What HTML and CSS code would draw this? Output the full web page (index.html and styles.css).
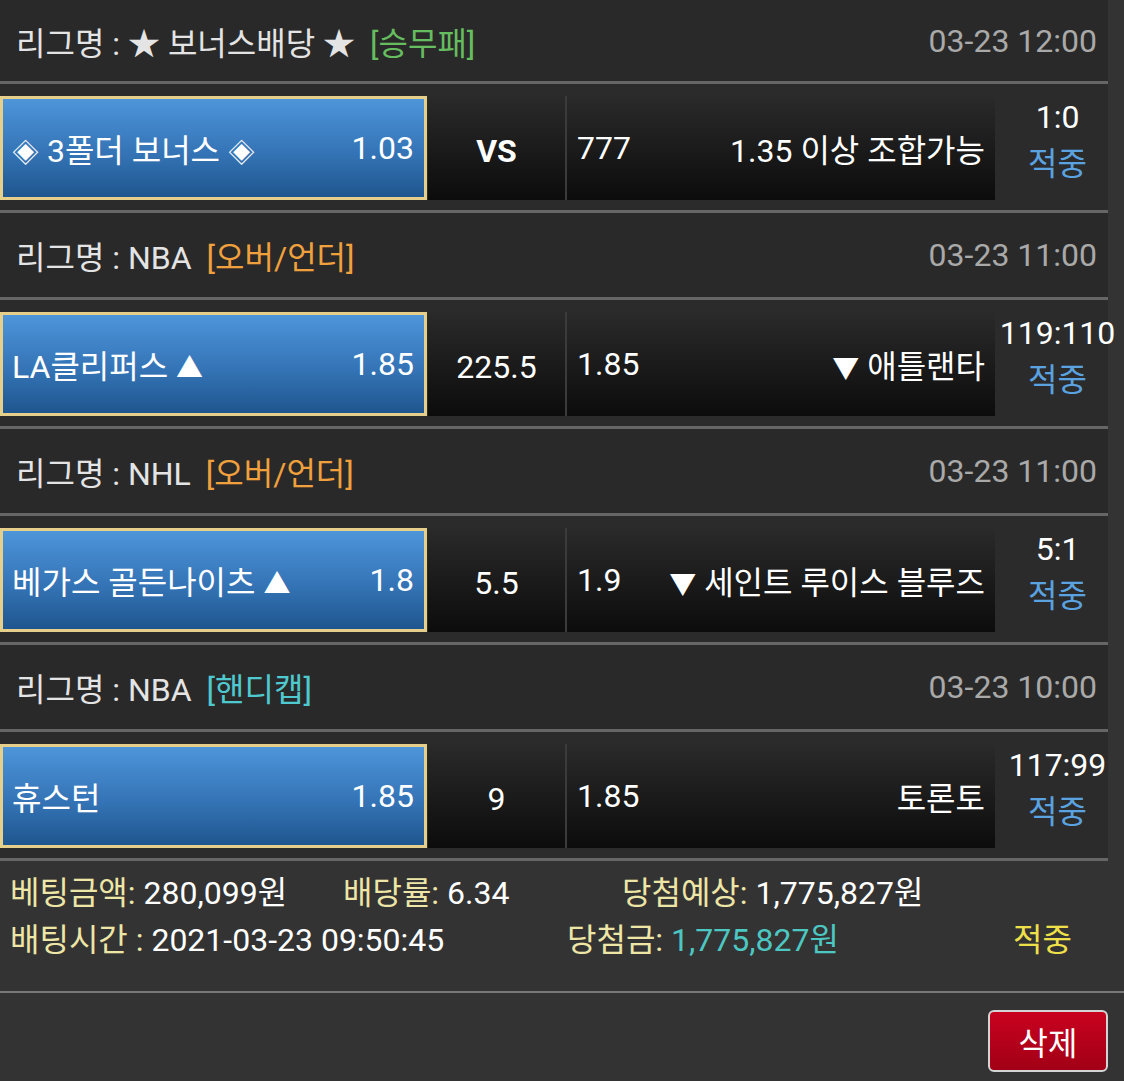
FILE: index.html
```html
<!DOCTYPE html>
<html lang="ko">
<head>
  <meta charset="UTF-8">
  <meta name="viewport" content="width=device-width, initial-scale=1.0">
  <title>배팅내역</title>
  <link rel="stylesheet" href="styles.css">
</head>
<body>
  <div class="bet-list">
    <div class="league">
      <span class="league-name">리그명 : ★ 보너스배당 ★</span>
      <span class="tag green">[승무패]</span>
      <span class="time">03-23 12:00</span>
    </div>
    <div class="match">
      <div class="home"><span><span class="sym">◈</span> 3폴더 보너스 <span class="sym">◈</span></span><span>1.03</span></div>
      <div class="mid vs">VS</div>
      <div class="away"><span>777</span><span>1.35 이상 조합가능</span></div>
      <div class="result"><div>1:0</div><div class="hit">적중</div></div>
    </div>

    <div class="league">
      <span class="league-name">리그명 : NBA</span>
      <span class="tag orange">[오버/언더]</span>
      <span class="time">03-23 11:00</span>
    </div>
    <div class="match">
      <div class="home"><span>LA클리퍼스 <span class="sym">▲</span></span><span>1.85</span></div>
      <div class="mid">225.5</div>
      <div class="away"><span>1.85</span><span><span class="sym">▼</span> 애틀랜타</span></div>
      <div class="result"><div>119:110</div><div class="hit">적중</div></div>
    </div>

    <div class="league">
      <span class="league-name">리그명 : NHL</span>
      <span class="tag orange">[오버/언더]</span>
      <span class="time">03-23 11:00</span>
    </div>
    <div class="match">
      <div class="home"><span>베가스 골든나이츠 <span class="sym">▲</span></span><span>1.8</span></div>
      <div class="mid">5.5</div>
      <div class="away"><span>1.9</span><span><span class="sym">▼</span> 세인트 루이스 블루즈</span></div>
      <div class="result"><div>5:1</div><div class="hit">적중</div></div>
    </div>

    <div class="league">
      <span class="league-name">리그명 : NBA</span>
      <span class="tag teal">[핸디캡]</span>
      <span class="time">03-23 10:00</span>
    </div>
    <div class="match">
      <div class="home"><span>휴스턴</span><span>1.85</span></div>
      <div class="mid">9</div>
      <div class="away"><span>1.85</span><span>토론토</span></div>
      <div class="result"><div>117:99</div><div class="hit">적중</div></div>
    </div>
  </div>

  <div class="summary">
    <div class="summary-line">
      <span class="col-a"><span class="label">베팅금액:</span> 280,099원</span>
      <span class="col-b"><span class="label">배당률:</span> 6.34</span>
      <span><span class="label">당첨예상:</span> 1,775,827원</span>
    </div>
    <div class="summary-line">
      <span class="col-c"><span class="label">배팅시간 :</span> 2021-03-23 09:50:45</span>
      <span class="col-d"><span class="label">당첨금:</span> <span class="win-amount">1,775,827원</span></span>
      <span class="status">적중</span>
    </div>
  </div>

  <div class="actions">
    <button class="delete-button">삭제</button>
  </div>
</body>
</html>
```

FILE: styles.css
```css
body {
  margin: 0;
  background-color: #333333;
  font-family: Roboto, "Noto Sans CJK KR", sans-serif;
  font-size: 32px;
  color: #ffffff;
  overflow: hidden;
}

.bet-list {
  width: 1108px;
}

.league {
  display: flex;
  align-items: center;
  height: 84px;
  padding: 0 11px 0 16px;
  background-color: #292929;
  border-bottom: 3px solid #666666;
  color: #e4e4e4;
}

.league:first-child {
  height: 81px;
}

.sym {
  font-size: 27px;
}

.tag {
  margin-left: 15px;
}

.tag.green {
  color: #66bd5f;
}

.tag.orange {
  color: #f0a03c;
}

.tag.teal {
  color: #4fc9d0;
}

.time {
  margin-left: auto;
  color: #a9a9a9;
}

.match {
  display: flex;
  height: 104px;
  padding: 12px 0 10px;
  background-color: #2b2b2b;
  border-bottom: 3px solid #666666;
}

.home {
  display: flex;
  flex-shrink: 0;
  justify-content: space-between;
  align-items: center;
  box-sizing: border-box;
  width: 427px;
  padding: 0 10px 0 9px;
  border: 3px solid #e6cf8a;
  background-image: linear-gradient(to bottom, #4e95da, #3474b6 55%, #1f568e);
  white-space: nowrap;
}

.mid {
  display: flex;
  flex-shrink: 0;
  justify-content: center;
  align-items: center;
  box-sizing: border-box;
  width: 139px;
  padding-top: 5px;
  margin-left: 1px;
  border-right: 2px solid #3b3b3b;
  background-image: linear-gradient(to bottom, #2a2a2a, #0c0c0c);
}

.vs {
  font-weight: bold;
}

.away {
  display: flex;
  flex-shrink: 0;
  justify-content: space-between;
  align-items: center;
  box-sizing: border-box;
  width: 428px;
  padding: 0 10px;
  background-image: linear-gradient(to bottom, #2a2a2a, #0c0c0c);
  white-space: nowrap;
}

.result {
  flex: 1;
  min-width: 0;
  display: flex;
  flex-direction: column;
  justify-content: center;
  align-items: center;
  padding: 0 0 14px 12px;
  line-height: 47px;
  white-space: nowrap;
}

.hit {
  color: #5aa2e0;
}

.summary {
  padding: 9px 0 27px 10px;
  border-bottom: 2px solid #787878;
  line-height: 47px;
  white-space: nowrap;
}

.summary-line {
  display: flex;
}

.label {
  color: #eee6a6;
}

.col-a {
  width: 333px;
}

.col-b {
  width: 279px;
}

.col-c {
  width: 557px;
}

.col-d {
  width: 446px;
}

.win-amount {
  color: #4cc7c2;
}

.status {
  color: #efe04a;
}

.actions {
  display: flex;
  justify-content: flex-end;
  padding: 17px 16px 0 0;
}

.delete-button {
  width: 120px;
  height: 62px;
  padding: 0;
  font-family: inherit;
  font-size: 32px;
  color: #ffffff;
  background-image: linear-gradient(to bottom, #c9021f, #a10016);
  border: 2px solid #d4d4d4;
  border-radius: 6px;
  cursor: pointer;
}
```
